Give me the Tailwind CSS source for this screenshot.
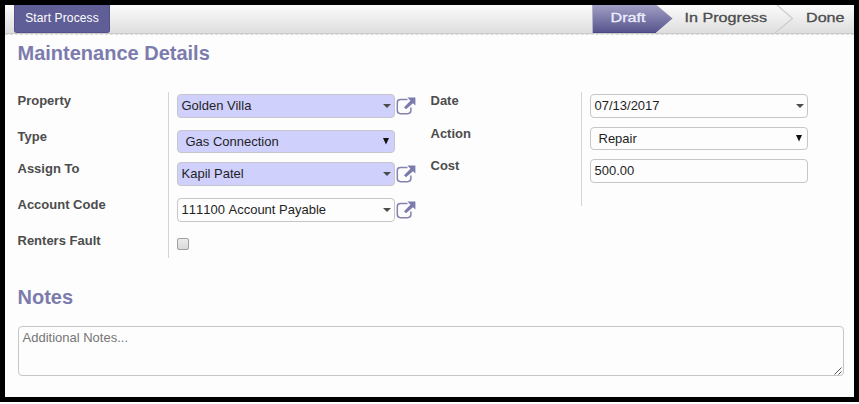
<!DOCTYPE html>
<html lang="en">
<head>
<meta charset="utf-8">
<title>Maintenance Details</title>
<script src="https://cdn.jsdelivr.net/npm/@tailwindcss/browser@4"></script>
</head>
<body class="bg-white font-['Liberation_Sans',Arial,sans-serif] text-[13px] leading-[18px] text-[#1f1f1f]">
<svg class="hidden">
  <symbol id="open" viewBox="0 0 20 18">
    <path d="M11.5 2.4H4.6Q1.3 2.4 1.3 5.4V13.6Q1.3 16.7 4.6 16.7H11.6Q14.9 16.7 14.9 13.6V10.5" fill="none" stroke="#8382b1" stroke-width="1.5"/>
    <path d="M11.5 .6H19.4V8.4L17 6.2L10 12.2L8 10.2L14.4 3.8Z" fill="#7c7bad"/>
  </symbol>
  <symbol id="caret" viewBox="0 0 8 4"><path d="M0 0H8L4 4Z" fill="#4c4c4c"/></symbol>
  <symbol id="drop" viewBox="0 0 6 7"><path d="M0 0H6L3 6.6Z" fill="#111"/></symbol>
</svg>
<div class="h-[402px] w-[859px] border-5 border-black bg-[#fdfdfd]">
  <header class="flex h-[29px] justify-between border-b border-[#cacaca] bg-linear-to-b from-[#fbfbfb] to-[#dedede]">
    <button class="ml-[9px] h-7 w-24 rounded-b-[3px] border border-t-0 border-[#53508a] bg-[#5f5e97] pb-[2px] text-[12px] tracking-[0.12px] whitespace-nowrap text-white">Start Process</button>
    <svg class="h-7 w-[262px]" viewBox="592 5 262 28" font-size="13">
      <defs>
        <linearGradient id="active" x1="0" y1="0" x2="0" y2="1"><stop stop-color="#a19fc4"/><stop offset="1" stop-color="#55528b"/></linearGradient>
      </defs>
      <path d="M593 5H656.5L672.5 18.5L655.5 33H593Z" fill="url(#active)"/>
      <path d="M592.5 5V33" stroke="#b4b3c6"/>
      <path d="M593 32.5H656" stroke="#4b4983"/>
      <path d="M777 5L792.5 18.5L775 33" fill="none" stroke="#cdcdcd" stroke-width="1.2"/>
      <text x="610.5" y="22" fill="#eeeeff" stroke="#eeeeff" stroke-width=".3" textLength="35" lengthAdjust="spacingAndGlyphs">Draft</text>
      <text x="684.5" y="22" fill="#4c4c4c" stroke="#4c4c4c" stroke-width=".3" textLength="82.5" lengthAdjust="spacingAndGlyphs">In Progress</text>
      <text x="806" y="22" fill="#4c4c4c" stroke="#4c4c4c" stroke-width=".3" textLength="38.5" lengthAdjust="spacingAndGlyphs">Done</text>
    </svg>
  </header>
  <div class="border-t border-dashed border-[#dcdcdc]"></div>
  <main class="pl-[12.5px]">
    <h1 class="mt-[6px] text-[20px] leading-6 font-bold text-[#7c7bad]">Maintenance Details</h1>
    <div class="mt-[27px] flex h-[166px] items-start">
      <div class="flex h-[166px] w-[151px] flex-col border-r border-[#d6d6d6] font-bold text-[#4c4c4c]">
        <label class="h-9">Property</label>
        <label class="h-8">Type</label>
        <label class="h-9">Assign To</label>
        <label class="h-9">Account Code</label>
        <label>Renters Fault</label>
      </div>
      <div class="ml-[8.5px] flex w-[253.5px] flex-col pt-[2px]">
        <div class="flex h-9 items-start gap-px">
          <div class="flex h-6 w-[218px] items-center justify-between rounded-[4px] border border-[#c6c6cc] bg-[#d0d0fd] pr-[3px] pl-[3.5px]"><span>Golden Villa</span><svg class="h-1 w-2"><use href="#caret"/></svg></div>
          <svg class="mt-[3px] h-[18px] w-5"><use href="#open"/></svg>
        </div>
        <div class="flex h-8 items-start">
          <div class="flex h-[23px] w-[218px] items-center justify-between rounded-[4px] border border-[#c6c6cc] bg-[#d0d0fd] pr-[5px] pl-[7.5px]"><span class="mt-px">Gas Connection</span><svg class="mb-px h-[7px] w-1.5"><use href="#drop"/></svg></div>
        </div>
        <div class="flex h-9 items-start gap-px">
          <div class="flex h-6 w-[218px] items-center justify-between rounded-[4px] border border-[#c6c6cc] bg-[#d0d0fd] pr-[3px] pl-[3.5px]"><span>Kapil Patel</span><svg class="h-1 w-2"><use href="#caret"/></svg></div>
          <svg class="mt-[3px] h-[18px] w-5"><use href="#open"/></svg>
        </div>
        <div class="flex h-10 items-start gap-px">
          <div class="flex h-6 w-[218px] items-center justify-between rounded-[4px] border border-[#c6c6c6] bg-[#fdfdfd] pr-[3px] pl-[3.5px]"><span class="[font-kerning:none]">111100 Account Payable</span><svg class="h-1 w-2"><use href="#caret"/></svg></div>
          <svg class="mt-[3px] h-[18px] w-5"><use href="#open"/></svg>
        </div>
        <div class="size-3 rounded-[2px] border border-[#a0a0a0] bg-linear-to-b from-[#ececec] to-[#d9d9d9]"></div>
      </div>
      <div class="flex h-[114px] w-[151.5px] flex-col border-r border-[#d6d6d6] font-bold text-[#4c4c4c]">
        <label class="h-[33px]">Date</label>
        <label class="h-8">Action</label>
        <label>Cost</label>
      </div>
      <div class="ml-2 flex w-[218px] flex-col gap-[9px] pt-[2px]">
        <div class="flex h-6 items-center justify-between rounded-[4px] border border-[#c6c6c6] bg-[#fdfdfd] pr-[3px] pl-[3.5px]"><span>07/13/2017</span><svg class="h-1 w-2"><use href="#caret"/></svg></div>
        <div class="flex h-[23px] items-center justify-between rounded-[4px] border border-[#c6c6c6] bg-[#fdfdfd] pr-[5px] pl-[7.5px]"><span class="mt-px">Repair</span><svg class="mb-px h-[7px] w-1.5"><use href="#drop"/></svg></div>
        <div class="flex h-6 items-center rounded-[4px] border border-[#c6c6c6] bg-[#fdfdfd] pl-[3.5px]">500.00</div>
      </div>
    </div>
    <h2 class="mt-[27px] text-[20px] leading-6 font-bold text-[#7c7bad]">Notes</h2>
    <div class="mt-[17px] flex h-[50px] w-[826px] items-start justify-between rounded-[4px] border border-[#c6c6c6] pt-[2px] pl-1 text-[#757575]">
      <span>Additional Notes...</span>
      <svg class="mr-px size-2 self-end" viewBox="0 0 8 8"><path d="M.5 7.5L7.5 .5M4.5 7.5L7.5 4.5" stroke="#555"/></svg>
    </div>
  </main>
</div>
</body>
</html>
